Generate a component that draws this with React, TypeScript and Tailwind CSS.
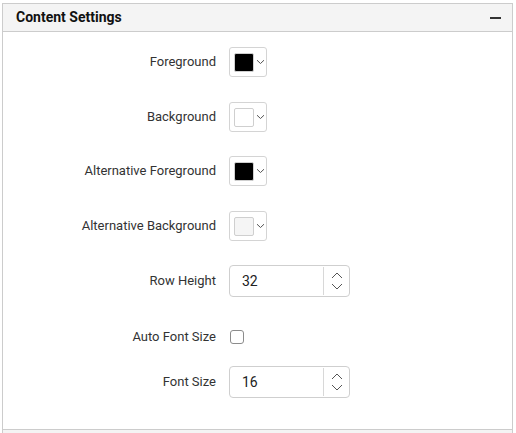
import React from "react";

function ColorPicker({ color }: { color: string }) {
  return (
    <div className="flex h-[30px] w-[38px] items-center rounded-[3px] border border-[#d4d4d4] bg-white pl-[4px]">
      <div
        className={`h-[19px] w-[20px] rounded-[2px] border border-[#cfcfcf] ${color}`}
      />
      <svg width="9" height="6" viewBox="0 0 9 6" className="ml-[2px]">
        <path d="M1 1.2 L4.5 4.5 L8 1.2" fill="none" stroke="#555" strokeWidth="1" />
      </svg>
    </div>
  );
}

function NumericInput({ value }: { value: string }) {
  return (
    <div className="flex h-8 w-[121px] items-stretch rounded-[4px] border border-[#cfcfcf] bg-white">
      <div className="flex flex-1 items-center pl-[12px] text-[14px] text-[#222]">{value}</div>
      <div className="my-[1px] flex w-[26px] flex-col items-center justify-center gap-[4px] border-l border-[#d8d8d8]">
        <svg width="12" height="7" viewBox="0 0 12 7">
          <path d="M1 6 L6 1 L11 6" fill="none" stroke="#555" strokeWidth="1" />
        </svg>
        <svg width="12" height="7" viewBox="0 0 12 7">
          <path d="M1 1 L6 6 L11 1" fill="none" stroke="#555" strokeWidth="1" />
        </svg>
      </div>
    </div>
  );
}

function Row({ label, className, children }: { label: string; className?: string; children: React.ReactNode }) {
  return (
    <div className={`flex h-8 items-center ${className ?? ""}`}>
      <div className="w-[213px] text-right text-[13px] text-[#333]">{label}</div>
      <div className="ml-[13px] flex items-center">{children}</div>
    </div>
  );
}

export default function App() {
  return (
    <div className="h-[433px] w-[516px] bg-white pl-[2px] pt-[3px]" style={{ fontFamily: "Roboto, 'Liberation Sans', sans-serif" }}>
      <div className="w-[511px] border-x border-t border-[#cccccc]">
        <div className="flex h-[28px] items-center justify-between border-b border-[#cccccc] bg-[#f4f4f4] pl-[13px] pr-[11px]">
          <span className="text-[14px] font-bold text-[#111]">Content Settings</span>
          <div className="h-[2px] w-[11px] bg-[#333]" />
        </div>
        <div className="h-[397px] pt-[14px]">
          <Row label="Foreground">
            <ColorPicker color="bg-black" />
          </Row>
          <Row label="Background" className="mt-[23px]">
            <ColorPicker color="bg-white" />
          </Row>
          <Row label="Alternative Foreground" className="mt-[22px]">
            <ColorPicker color="bg-black" />
          </Row>
          <Row label="Alternative Background" className="mt-[23px]">
            <ColorPicker color="bg-[#f5f5f5]" />
          </Row>
          <Row label="Row Height" className="mt-[23px]">
            <NumericInput value="32" />
          </Row>
          <Row label="Auto Font Size" className="mt-[24px]">
            <div className="ml-[1px] h-[14px] w-[14px] rounded-[3px] border border-[#8c8c8c] bg-white" />
          </Row>
          <Row label="Font Size" className="mt-[13px]">
            <NumericInput value="16" />
          </Row>
        </div>
        <div className="h-[4px] border-t border-[#cccccc] bg-[#f4f4f4]" />
      </div>
    </div>
  );
}
